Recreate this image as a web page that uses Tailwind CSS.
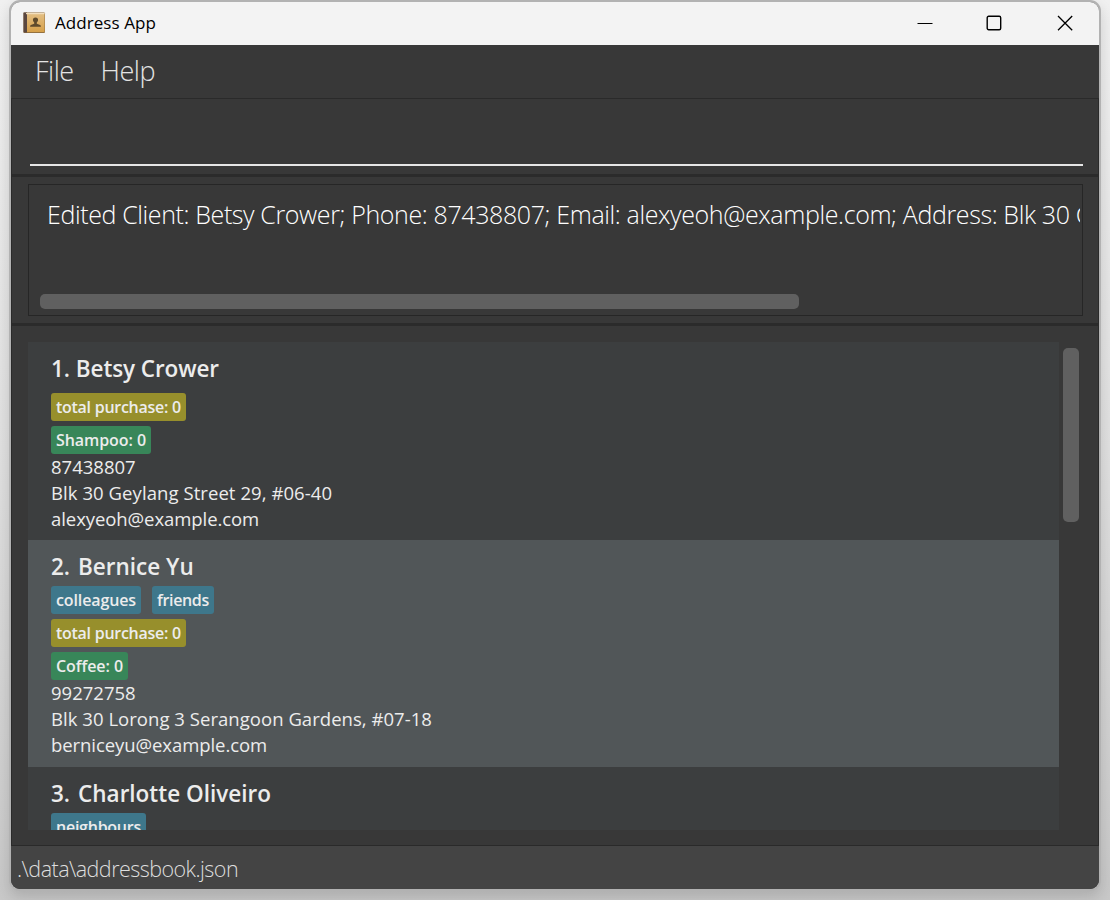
<!DOCTYPE html>
<html lang="en">
<head>
<meta charset="utf-8">
<title>Address App</title>
<script src="https://cdn.jsdelivr.net/npm/@tailwindcss/browser@4"></script>
</head>
<body class="h-[900px] w-[1110px] overflow-hidden bg-linear-to-b from-[#f0f0f0] via-[#e0e0e0] to-[#c8c8c8] pl-[9px] font-['Open_Sans',sans-serif]">
<div class="flex h-[891px] w-[1092px] flex-col overflow-hidden rounded-[11px] border-2 border-[#b2b2b2] bg-[#383838] whitespace-nowrap shadow-[0_6px_14px_rgba(0,0,0,0.14)]">

  <!-- Title bar -->
  <header class="flex h-[43px] shrink-0 items-center bg-[#f3f3f3] pb-[2px] pl-3 text-black">
    <svg class="h-[22px] w-[23px]" viewBox="0 0 23 22">
      <defs><linearGradient id="g" x1="0" y1="0" x2="0" y2="1"><stop offset="0" stop-color="#e3bf85"/><stop offset="1" stop-color="#d6a04a"/></linearGradient></defs>
      <rect x="0.5" y="0.5" width="21.5" height="20.5" rx="1" fill="#94713f"/>
      <rect x="0.5" y="0.5" width="3.5" height="20" fill="#5a4740"/>
      <rect x="4" y="1" width="17.5" height="19" fill="url(#g)"/>
      <rect x="3" y="1" width="18.5" height="1.2" fill="#f3dfbd"/>
      <path d="M12.500 5.600c1.700 0 2.700 1 2.600 2.400-.1 1.300-.8 2-1.300 2.500v1.300l3.300 1.100c.6.300.8.900.8 1.900H7.100c0-1 .2-1.600.8-1.900l3.300-1.100v-1.300c-.5-.5-1.200-1.200-1.300-2.500-.1-1.400.9-2.400 2.600-2.400z" fill="#5f4a2c"/>
    </svg>
    <span class="ml-[9px] text-[17px] tracking-[0.06px]">Address App</span>
    <div class="ml-auto flex items-center pr-[26px]">
      <svg class="h-4 w-4" viewBox="0 0 16 16"><path d="M.5 8.500h15" stroke="#000" stroke-width="1"/></svg>
      <svg class="ml-[53px] h-4 w-4" viewBox="0 0 16 16"><rect x="1.200" y="1.200" width="13.500" height="13.500" rx="1.500" fill="none" stroke="#000" stroke-width="1.400"/></svg>
      <svg class="ml-[55px] h-4 w-4" viewBox="0 0 16 16"><path d="M1 1l14.200 14.200M15.200 1L1 15.200" stroke="#000" stroke-width="1.300"/></svg>
    </div>
  </header>

  <!-- Menu -->
  <nav class="flex h-[53px] shrink-0 items-center gap-[27px] pl-6 text-[27px] font-light tracking-[-0.5px] text-[#e4e4e4]">
    <span>File</span><span>Help</span>
  </nav>

  <main class="flex h-[748px] shrink-0 flex-col border border-[#2a2a2a]">
    <!-- Command box -->
    <section class="h-[75px] shrink-0 pr-[15px] pl-[18px]">
      <div class="h-[67px] border-b-2 border-[#e6e6e6]"></div>
    </section>
    <div class="h-[3px] shrink-0 bg-[#2b2b2b]"></div>

    <!-- Result display -->
    <section class="h-[146px] shrink-0 pt-[7px] pr-[15px] pl-4">
      <div class="flex h-[132px] flex-col border border-[#262626] pr-[2px] pl-[11px]">
        <div class="h-[109px] overflow-hidden pt-[11px] pl-[7px] text-[25px] leading-9 font-light tracking-[-0.38px] text-white">Edited Client: Betsy Crower; Phone: 87438807; Email: alexyeoh@example.com; Address: Blk 30 Geylang</div>
        <div class="h-[15px] w-[759px] shrink-0 rounded-[5px] bg-[#606060]"></div>
      </div>
    </section>
    <div class="h-[3px] shrink-0 bg-[#2b2b2b]"></div>

    <!-- Clients -->
    <section class="flex h-[504px] gap-1 pt-4 pl-4">
      <div class="h-[488px] w-[1031px] overflow-hidden text-[18.5px] leading-[26px] text-[#ececec]">
        <article class="h-[198px] bg-[#3c3e3f] pt-[11px] pl-[23px]">
          <h2 class="flex h-8 gap-[6px] text-[22.5px] leading-8 font-semibold tracking-[-0.1px]"><span>1.</span><span>Betsy Crower</span></h2>
          <div class="mt-2 flex flex-col items-start gap-[5px] text-[16px] leading-7 font-semibold">
            <span class="rounded-[3px] bg-[#978f2c] px-[5px] tracking-[-0.27px]">total purchase: 0</span>
            <span class="rounded-[3px] bg-[#388659] px-[5px] tracking-[-0.07px]">Shampoo: 0</span>
          </div>
          <p>87438807</p><p class="tracking-[0.07px]">Blk 30 Geylang Street 29, #06-40</p><p class="tracking-[-0.07px]">alexyeoh@example.com</p>
        </article>
        <article class="h-[227px] bg-[#515658] pt-[11px] pl-[23px]">
          <h2 class="flex h-8 gap-2 text-[22.5px] leading-8 font-semibold"><span>2.</span><span>Bernice Yu</span></h2>
          <div class="mt-[3px] flex flex-col items-start gap-[5px] text-[16px] leading-7 font-semibold">
            <div class="flex gap-[11px]"><span class="rounded-[3px] bg-[#3e778b] px-[5px] tracking-[-0.12px]">colleagues</span><span class="rounded-[3px] bg-[#3e778b] px-[5px] tracking-[-0.33px]">friends</span></div>
            <span class="rounded-[3px] bg-[#978f2c] px-[5px] tracking-[-0.27px]">total purchase: 0</span>
            <span class="rounded-[3px] bg-[#388659] px-[5px] tracking-[-0.07px]">Coffee: 0</span>
          </div>
          <p>99272758</p><p class="tracking-[0.04px]">Blk 30 Lorong 3 Serangoon Gardens, #07-18</p><p class="tracking-[-0.07px]">berniceyu@example.com</p>
        </article>
        <article class="h-[227px] bg-[#3c3e3f] pt-[11px] pl-[23px]">
          <h2 class="flex h-8 gap-2 text-[22.5px] leading-8 font-semibold"><span>3.</span><span>Charlotte Oliveiro</span></h2>
          <div class="mt-[3px] flex text-[16px] leading-7 font-semibold"><span class="rounded-[3px] bg-[#3e778b] px-[5px] tracking-[-0.25px]">neighbours</span></div>
        </article>
      </div>
      <div class="mt-[6px] h-[174px] w-4 rounded-[5px] bg-[#606060]"></div>
    </section>
  </main>

  <!-- Status bar -->
  <footer class="flex flex-1 items-center bg-[#444444] pt-[3px] pl-[6px] text-[21.5px] leading-8 font-light tracking-[-0.54px] text-[#dedede]">.\data\addressbook.json</footer>
</div>
</body>
</html>
